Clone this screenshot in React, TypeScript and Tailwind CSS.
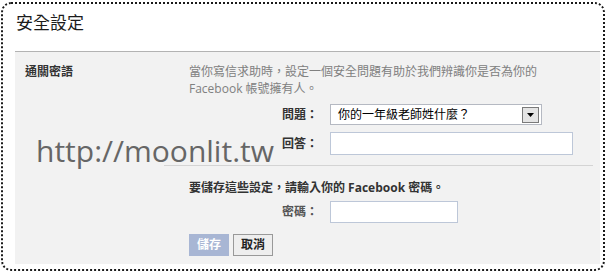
import React from "react";

// Facebook-style security settings panel (安全設定)

const font = "font-['Open_Sans','Noto_Sans_CJK_TC',sans-serif]";

function SelectBox() {
    return (
        <div className="w-[212px] h-[21px] border border-[#b5b9c2] bg-white flex items-center pl-[7px] pr-[2px]">
            <span className="flex-1 text-[12px] leading-none text-black">你的一年級老師姓什麼？</span>
            <div className="w-[17px] h-[16px] border border-[#7a7a7a] bg-[#e4e4e4] flex items-center justify-center">
                <svg width="7" height="4" viewBox="0 0 7 4">
                    <path d="M0 0h7L3.5 4z" fill="#000" />
                </svg>
            </div>
        </div>
    );
}

export default function App() {
    return (
        <div className={`w-[607px] h-[273px] bg-white pl-[1px] pt-[2px] ${font}`}>
            <div className="w-[604px] h-[269px] border-2 border-dotted border-[#1a1a1a] rounded-[10px] flex flex-col pl-[12px] pr-[3px] pb-[5px]">
                <h1 className="h-[47px] pt-[8px] pl-[1px] text-[17px] leading-[22px] text-[#1c1c1c]">安全設定</h1>

                <div className="relative flex-1 bg-[#f2f2f2] border-t border-[#b3b3b3]">
                    {/* question section */}
                    <div className="flex pl-[10px] pt-[11px]">
                        <div className="w-[164px] text-[12px] leading-[17px] font-bold text-[#333]">通關密語</div>
                        <div className="flex-1">
                            <p className="text-[12px] leading-[17px] text-[#808080]">
                                當你寫信求助時，設定一個安全問題有助於我們辨識你是否為你的
                                <br />
                                Facebook 帳號擁有人。
                            </p>
                            <div className="grid grid-cols-[129px_auto] gap-x-[12px] gap-y-[7px] items-center mt-[7px] justify-start">
                                <span className="text-[12px] font-bold text-[#333] text-right">問題：</span>
                                <SelectBox />
                                <span className="text-[12px] font-bold text-[#333] text-right">回答：</span>
                                <div className="w-[243px] h-[23px] border border-[#bdc7d8] bg-white" />
                            </div>
                        </div>
                    </div>

                    <div className="ml-[149px] mr-[7px] mt-[10px] border-t border-[#d4d4d4]" />

                    {/* password section */}
                    <div className="pl-[174px] pt-[14px]">
                        <p className="text-[12px] leading-[16px] font-bold text-[#333]">
                            要儲存這些設定，請輸入你的 Facebook 密碼。
                        </p>
                        <div className="grid grid-cols-[129px_auto] gap-x-[12px] items-center mt-[5px] justify-start">
                            <span className="text-[12px] font-bold text-[#555] text-right">密碼：</span>
                            <div className="w-[128px] h-[22px] border border-[#bdc7d8] bg-white" />
                        </div>
                        <div className="flex gap-[4px] mt-[11px]">
                            <button className="w-[40px] h-[22px] bg-[#a8b6d4] text-white text-[12px] font-bold">儲存</button>
                            <button className="w-[40px] h-[22px] bg-[#eeeeee] border border-[#999] text-[#222] text-[12px] font-bold">取消</button>
                        </div>
                    </div>

                    {/* watermark */}
                    <span className="absolute left-[21px] top-[84px] text-[30px] leading-none text-[#666] font-['Open_Sans',sans-serif] pointer-events-none">
                        http://moonlit.tw
                    </span>
                </div>
            </div>
        </div>
    );
}
